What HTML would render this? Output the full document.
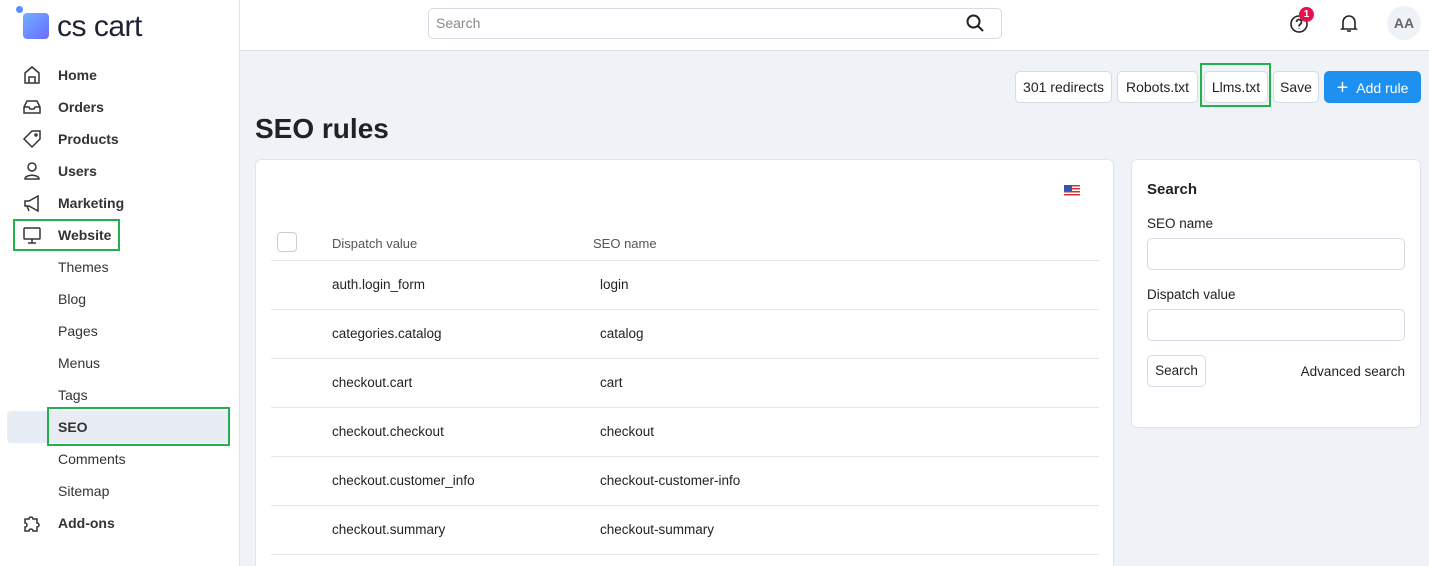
<!DOCTYPE html>
<html><head><meta charset="utf-8"><style>
*{box-sizing:border-box;margin:0;padding:0}
html{width:1429px;height:566px;overflow:hidden}
body{width:1429px;height:566px;overflow:hidden;font-family:"Liberation Sans",sans-serif;font-size:14px;color:#222;background:#eff2f7;position:relative}
.side{position:absolute;left:0;top:0;width:240px;height:566px;background:#fff;border-right:1px solid #dde2ea}
.top{position:absolute;left:240px;top:0;right:0;height:51px;background:#fff;border-bottom:1px solid #dde2ea}
.logo{position:absolute;left:22px;top:8px}
.nav{position:absolute;left:0;width:240px;height:32px;line-height:32px;font-size:14px}
.nav.main{font-weight:bold;color:#333}
.nav.main span{position:absolute;left:58px}
.nav.sub span{position:absolute;left:58px;color:#333}
.nav svg{position:absolute;left:22px;top:6px}
.box{position:absolute;border:2px solid #22b14c}
.btn{position:absolute;top:71px;height:32px;line-height:30px;background:#fff;border:1px solid #d5dbe5;border-radius:5px;font-size:14px;text-align:center;color:#222}
.card{position:absolute;background:#fff;border:1px solid #e0e5ec;border-radius:6px}
.row{position:absolute;left:15px;width:828px;height:49px;border-top:1px solid #e3e6ea;line-height:48px;font-size:13.5px}
.row .a{position:absolute;left:61px}.row .b{position:absolute;left:329px}
input{position:absolute;border:1px solid #d5dbe5;border-radius:5px;background:#fff}
</style></head><body>
<div class="side">
<div class="logo"><svg width="140" height="34"><defs><linearGradient id="g" x1="0" y1="0" x2="1" y2="1"><stop offset="0" stop-color="#6fb0ff"/><stop offset="1" stop-color="#6a6bff"/></linearGradient></defs><rect x="1" y="5" width="26" height="26" rx="4" fill="url(#g)"/><text x="35" y="28" font-family="Liberation Sans" font-size="30" fill="#1e2233" letter-spacing="-0.5">cs cart</text></svg></div>
<div style="position:absolute;left:16px;top:6px;width:7px;height:7px;border-radius:50%;background:#5b8cff"></div>
<div class="nav main" style="top:59px"><svg width="20" height="20" fill="none" stroke="#333" stroke-width="1.5"><path d="M3 18V8l7-6 7 6v10zM7 18v-6h6v6"/></svg><span>Home</span></div>
<div class="nav main" style="top:91px"><svg width="20" height="20" fill="none" stroke="#333" stroke-width="1.5"><path d="M2 10l3-6h10l3 6v6H2zM2 10h5l1 2h4l1-2h5"/></svg><span>Orders</span></div>
<div class="nav main" style="top:123px"><svg width="20" height="20" fill="none" stroke="#333" stroke-width="1.5"><path d="M2 10l8-8h8v8l-8 8z"/><circle cx="14" cy="6" r="1"/></svg><span>Products</span></div>
<div class="nav main" style="top:155px"><svg width="20" height="20" fill="none" stroke="#333" stroke-width="1.5"><circle cx="10" cy="6" r="4"/><path d="M3 18c0-5 14-5 14 0z"/></svg><span>Users</span></div>
<div class="nav main" style="top:187px"><svg width="20" height="20" fill="none" stroke="#333" stroke-width="1.5"><path d="M3 8h4l9-5v15l-9-5H3zM5 13l2 5"/></svg><span>Marketing</span></div>
<div class="nav main" style="top:219px"><svg width="20" height="20" fill="none" stroke="#333" stroke-width="1.5"><rect x="2" y="3" width="16" height="11" rx="1"/><path d="M10 14v4M6 18h8"/></svg><span>Website</span></div>
<div class="box" style="left:13px;top:219px;width:107px;height:32px"></div>
<div class="nav sub" style="top:251px"><span>Themes</span></div>
<div class="nav sub" style="top:283px"><span>Blog</span></div>
<div class="nav sub" style="top:315px"><span>Pages</span></div>
<div class="nav sub" style="top:347px"><span>Menus</span></div>
<div class="nav sub" style="top:379px"><span>Tags</span></div>
<div class="nav sub" style="top:411px;left:7px;width:223px;background:#e8edf5;border-radius:4px"><span style="left:51px;font-weight:bold">SEO</span></div>
<div class="box" style="left:47px;top:407px;width:183px;height:39px"></div>
<div class="nav sub" style="top:443px"><span>Comments</span></div>
<div class="nav sub" style="top:475px"><span>Sitemap</span></div>
<div class="nav main" style="top:507px"><svg width="20" height="20" fill="none" stroke="#333" stroke-width="1.5"><path d="M3 6h4a2 2 0 014 0h4v4a2 2 0 010 4v4h-4a2 2 0 00-4 0H3v-4a2 2 0 000-4z"/></svg><span>Add-ons</span></div>
</div>
<div class="top">
<div style="position:absolute;left:188px;top:8px;width:574px;height:31px;border:1px solid #d5dbe5;border-radius:5px;color:#888;line-height:29px;padding-left:7px">Search</div>
<svg style="position:absolute;left:726px;top:14px" width="18" height="18" fill="none" stroke="#222" stroke-width="2"><circle cx="7.5" cy="7.5" r="6"/><path d="M12 12l5 5"/></svg>
<svg style="position:absolute;left:1049px;top:14px" width="20" height="20" fill="none" stroke="#222" stroke-width="1.6"><circle cx="10" cy="10" r="8"/><path d="M7.5 8a2.5 2.5 0 114 2c-1 .7-1.5 1-1.5 2.5M10 14.5v.5"/></svg>
<div style="position:absolute;left:1059px;top:7px;width:15px;height:15px;border-radius:50%;background:#e0134f;color:#fff;font-size:10px;font-weight:bold;text-align:center;line-height:15px">1</div>
<svg style="position:absolute;left:1099px;top:13px" width="20" height="20" fill="none" stroke="#222" stroke-width="1.6"><path d="M4 15V9a6 6 0 0112 0v6l1 1H3zM8 18h4"/></svg>
<div style="position:absolute;left:1147px;top:6px;width:34px;height:34px;border-radius:50%;background:#eef1f6;color:#666;font-weight:bold;font-size:14px;text-align:center;line-height:34px">AA</div>
</div>
<div class="btn" style="left:1015px;width:97px">301 redirects</div>
<div class="btn" style="left:1117px;width:81px">Robots.txt</div>
<div class="btn" style="left:1204px;width:64px">Llms.txt</div>
<div class="box" style="left:1200px;top:63px;width:71px;height:44px"></div>
<div class="btn" style="left:1273px;width:46px">Save</div>
<div class="btn" style="left:1324px;width:97px;background:#1e90f0;border-color:#1e90f0;color:#fff"><span style="font-size:20px;position:relative;top:1px;margin-right:8px">+</span>Add rule</div>
<div style="position:absolute;left:255px;top:113px;font-size:28px;font-weight:bold;color:#222">SEO rules</div>
<div class="card" style="left:255px;top:159px;width:859px;height:407px;border-bottom:none;border-radius:6px 6px 0 0;overflow:hidden">
<div style="position:absolute;left:808px;top:25px;width:16px;height:11px;background:repeating-linear-gradient(#c33 0 1.5px,#fff 1.5px 3px)"><div style="width:8px;height:6px;background:#35a"></div></div>
<div style="position:absolute;left:21px;top:72px;width:20px;height:20px;border:1px solid #c9ced6;border-radius:4px"></div>
<div style="position:absolute;left:76px;top:76px;font-size:13px;color:#555">Dispatch value</div>
<div style="position:absolute;left:337px;top:76px;font-size:13px;color:#555">SEO name</div>
<div class="row" style="top:100px"><span class="a">auth.login_form</span><span class="b">login</span></div>
<div class="row" style="top:149px"><span class="a">categories.catalog</span><span class="b">catalog</span></div>
<div class="row" style="top:198px"><span class="a">checkout.cart</span><span class="b">cart</span></div>
<div class="row" style="top:247px"><span class="a">checkout.checkout</span><span class="b">checkout</span></div>
<div class="row" style="top:296px"><span class="a">checkout.customer_info</span><span class="b">checkout-customer-info</span></div>
<div class="row" style="top:345px"><span class="a">checkout.summary</span><span class="b">checkout-summary</span></div>
<div class="row" style="top:394px;height:12px"></div>
</div>
<div class="card" style="left:1131px;top:159px;width:290px;height:269px">
<div style="position:absolute;left:15px;top:21px;font-size:15px;font-weight:bold">Search</div>
<div style="position:absolute;left:15px;top:56px;font-size:13.5px">SEO name</div>
<input style="left:15px;top:78px;width:258px;height:32px">
<div style="position:absolute;left:15px;top:127px;font-size:13.5px">Dispatch value</div>
<input style="left:15px;top:149px;width:258px;height:32px">
<div style="position:absolute;left:15px;top:195px;width:59px;height:32px;border:1px solid #d5dbe5;border-radius:5px;text-align:center;line-height:30px;font-size:13.5px">Search</div>
<div style="position:absolute;right:15px;top:204px;font-size:13.5px">Advanced search</div>
</div>
</body></html>
